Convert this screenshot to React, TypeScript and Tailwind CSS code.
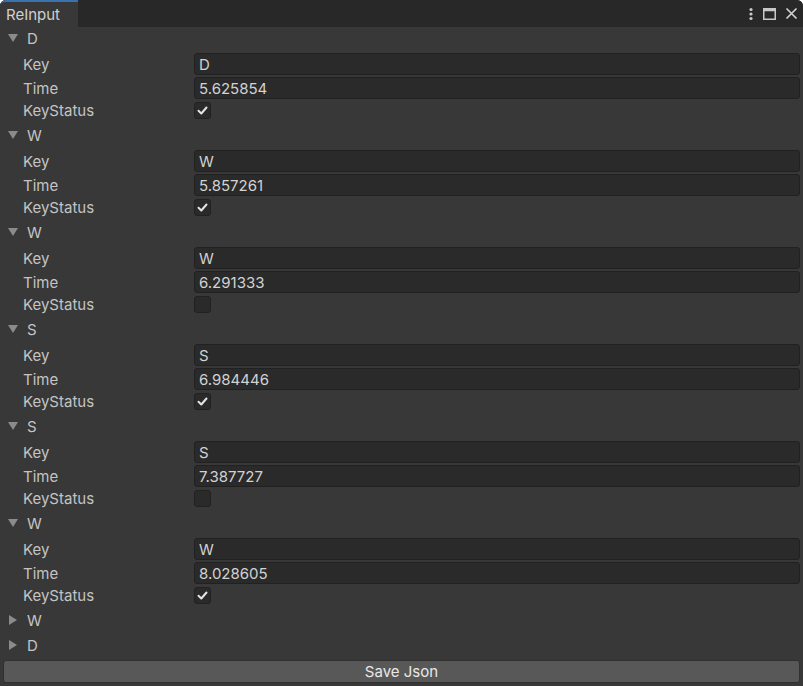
import React from 'react';

type Entry = { key: string; time: string; status: boolean; open: boolean };

const ENTRIES: Entry[] = [
  { key: 'D', time: '5.625854', status: true, open: true },
  { key: 'W', time: '5.857261', status: true, open: true },
  { key: 'W', time: '6.291333', status: false, open: true },
  { key: 'S', time: '6.984446', status: true, open: true },
  { key: 'S', time: '7.387727', status: false, open: true },
  { key: 'W', time: '8.028605', status: true, open: true },
  { key: 'W', time: '', status: false, open: false },
  { key: 'D', time: '', status: false, open: false },
];

function Arrow({ open }: { open: boolean }) {
  return (
    <svg width="12" height="12" viewBox="0 0 12 12" className="shrink-0">
      {open ? <path d="M1 2 L11 2 L6 10 Z" fill="#8b8b8b" /> : <path d="M2 1 L10 6 L2 11 Z" fill="#8b8b8b" />}
    </svg>
  );
}

function Field({ value }: { value: string }) {
  return (
    <div className="flex h-[22px] flex-1 items-center rounded-[3px] border border-[#212121] bg-[#2a2a2a] pl-[4px] text-[15px] leading-none text-[#d2d2d2]">
      {value}
    </div>
  );
}

function Row({ label, children }: { label: string; children: React.ReactNode }) {
  return (
    <div className="flex h-[22px] items-center">
      <span className="w-[194px] shrink-0 pl-[23px] text-[15px] leading-none text-[#c4c4c4]">{label}</span>
      {children}
    </div>
  );
}

function Item({ e }: { e: Entry }) {
  return (
    <div className={e.open ? 'mb-[4px]' : 'mb-[3px]'}>
      <div className="flex h-[22px] items-center gap-[8px] pl-[7px] text-[15px] leading-none text-[#c4c4c4]">
        <Arrow open={e.open} />
        <span>{e.key}</span>
      </div>
      {e.open && (
        <div className="mt-[4px] flex flex-col gap-[2px] pr-[3px]">
          <Row label="Key">
            <Field value={e.key} />
          </Row>
          <Row label="Time">
            <Field value={e.time} />
          </Row>
          <div className="flex h-[19px] items-center">
            <span className="w-[194px] shrink-0 pl-[23px] text-[15px] leading-none text-[#c4c4c4]">KeyStatus</span>
            <div className="flex h-[17px] w-[17px] items-center justify-center rounded-[3px] border border-[#212121] bg-[#2a2a2a]">
              {e.status && (
                <svg width="11" height="11" viewBox="0 0 11 11">
                  <path d="M1.5 5.8 L4.3 8.5 L9.5 2.5" stroke="#e4e4e4" strokeWidth="2" fill="none" strokeLinecap="round" strokeLinejoin="round" />
                </svg>
              )}
            </div>
          </div>
        </div>
      )}
    </div>
  );
}

export default function App() {
  return (
    <div
      className="flex h-[686px] w-[803px] flex-col overflow-hidden rounded-t-[6px] bg-[#383838]"
      style={{ fontFamily: 'Inter, "Noto Sans", sans-serif' }}
    >
      <div className="flex h-[27px] shrink-0 items-stretch bg-[#282828]">
        <div className="flex w-[78px] items-center rounded-tl-[5px] border-t-2 border-[#3a72b0] bg-[#383838] pl-[6px] text-[15px] leading-none text-[#d0d0d0]">
          ReInput
        </div>
        <div className="flex-1" />
        <div className="flex items-center gap-[9px] pr-[5px]">
          <svg width="6" height="14" viewBox="0 0 6 14">
            <circle cx="3" cy="2.5" r="1.6" fill="#c8c8c8" />
            <circle cx="3" cy="7" r="1.6" fill="#c8c8c8" />
            <circle cx="3" cy="11.5" r="1.6" fill="#c8c8c8" />
          </svg>
          <svg width="13" height="12" viewBox="0 0 13 12">
            <rect x="0.75" y="0.75" width="11.5" height="10.5" fill="none" stroke="#c8c8c8" strokeWidth="1.5" />
            <rect x="0.75" y="0.75" width="11.5" height="2.5" fill="#c8c8c8" />
          </svg>
          <svg width="13" height="13" viewBox="0 0 13 13">
            <path d="M1.5 1.5 L11.5 11.5 M11.5 1.5 L1.5 11.5" stroke="#d0d0d0" strokeWidth="1.7" />
          </svg>
        </div>
      </div>
      <div className="flex flex-1 flex-col">
        {ENTRIES.map((e, i) => (
          <Item key={i} e={e} />
        ))}
        <div className="mx-[3px] mt-[1px] flex h-[23px] items-center justify-center rounded-[3px] border border-[#303030] bg-[#585858] text-[15px] leading-none text-[#e8e8e8]">
          Save Json
        </div>
      </div>
    </div>
  );
}
